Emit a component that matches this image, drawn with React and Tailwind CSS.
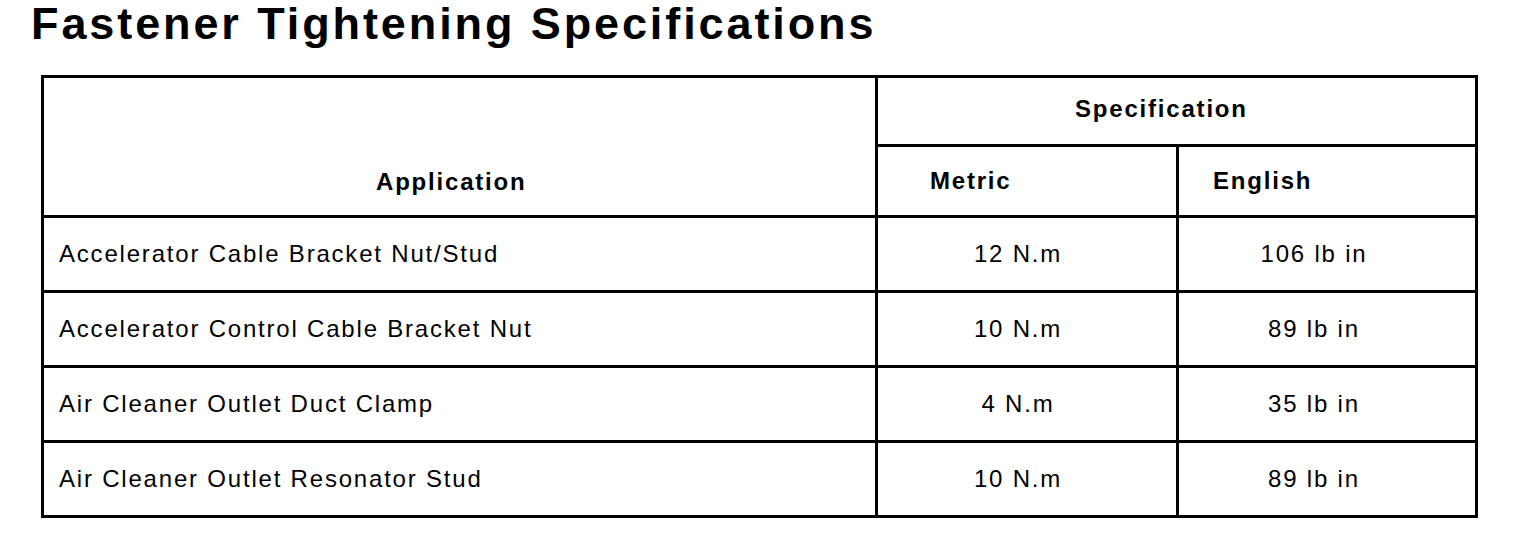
const rows = [
  ['Accelerator Cable Bracket Nut/Stud', '12 N.m', '106 lb in'],
  ['Accelerator Control Cable Bracket Nut', '10 N.m', '89 lb in'],
  ['Air Cleaner Outlet Duct Clamp', '4 N.m', '35 lb in'],
  ['Air Cleaner Outlet Resonator Stud', '10 N.m', '89 lb in'],
];

export default function App() {
  return (
    <div className="min-h-screen bg-white text-black font-['Liberation_Sans',Arial,sans-serif]">
      <h1 className="pl-[31px] pt-[1px] text-[45px] leading-[45px] font-bold tracking-[2.9px]">
        Fastener Tightening Specifications
      </h1>

      <div className="mt-[29px] ml-[41px] w-[1437px] border-[3px] border-black grid grid-cols-[834px_301px_296px] grid-rows-[69px_71px_75px_75px_75px_72px] text-[24px] leading-[24px] tracking-[1.8px]">
        <div className="row-span-2 border-r-[3px] border-b-[3px] border-black flex items-end pb-[21px] pl-[332px] font-bold">
          Application
        </div>
        <div className="col-span-2 border-b-[3px] border-black flex items-start pt-[19px] pl-[197px] font-bold">
          Specification
        </div>
        <div className="border-r-[3px] border-b-[3px] border-black flex items-center pl-[52px] font-bold">
          Metric
        </div>
        <div className="border-b-[3px] border-black flex items-center pl-[34px] font-bold">
          English
        </div>

        {rows.map(([name, metric, english], i) => {
          const last = i === rows.length - 1;
          return [
            <div
              key={name}
              className={`border-r-[3px] border-black flex items-center pl-[15px] ${last ? '' : 'border-b-[3px]'}`}
            >
              {name}
            </div>,
            <div
              key={name + '-m'}
              className={`border-r-[3px] border-black flex items-center justify-center pr-[18px] ${last ? '' : 'border-b-[3px]'}`}
            >
              {metric}
            </div>,
            <div
              key={name + '-e'}
              className={`border-black flex items-center justify-center pr-[26px] ${last ? '' : 'border-b-[3px]'}`}
            >
              {english}
            </div>,
          ];
        })}
      </div>
    </div>
  );
}
